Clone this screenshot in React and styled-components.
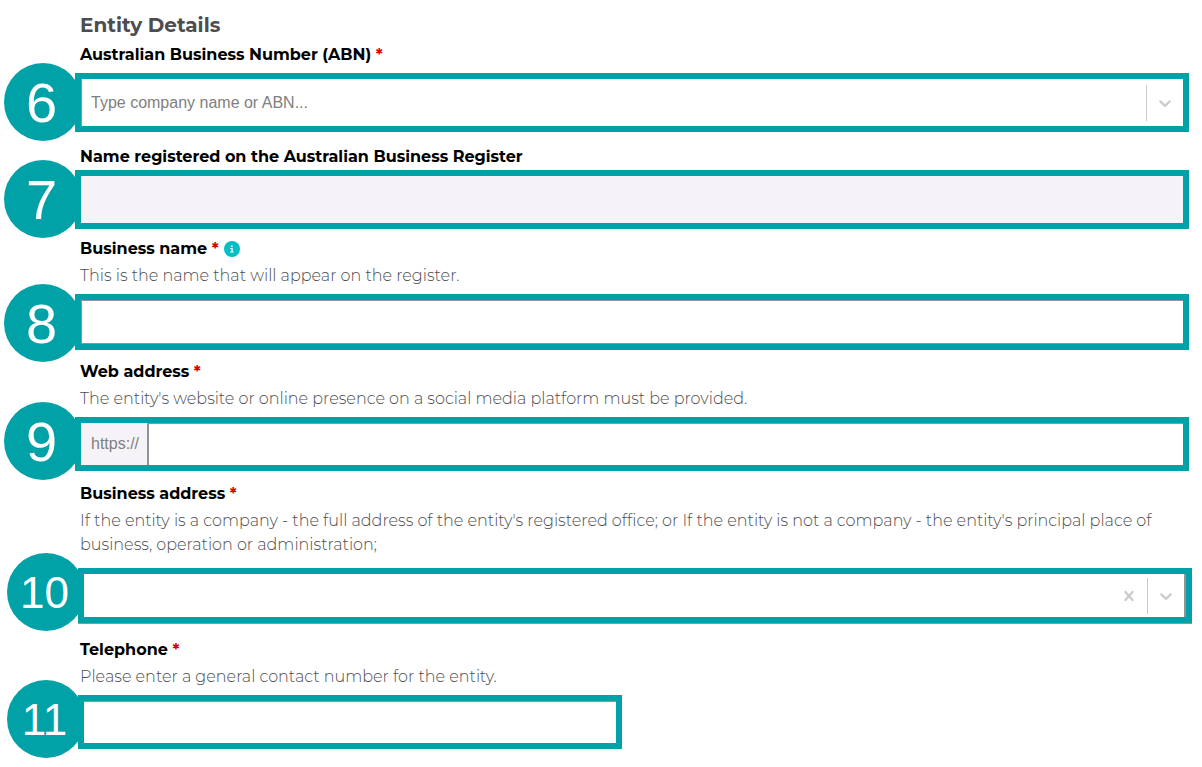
import React, { useState } from "react";
import styled, { createGlobalStyle } from "styled-components";

const chevronPath =
  "M4.516 7.548c0.436-0.446 1.043-0.481 1.576 0l3.908 3.747 3.908-3.747c0.533-0.481 1.141-0.446 1.574 0 0.436 0.445 0.408 1.197 0 1.615-0.406 0.418-4.695 4.502-4.695 4.502-0.217 0.223-0.502 0.335-0.787 0.335s-0.57-0.112-0.789-0.335c0 0-4.287-4.084-4.695-4.502s-0.436-1.17 0-1.615z";
const crossPath =
  "M14.348 14.849c-0.469 0.469-1.229 0.469-1.697 0l-2.651-3.030-2.651 3.029c-0.469 0.469-1.229 0.469-1.697 0-0.469-0.469-0.469-1.229 0-1.697l2.758-3.15-2.759-3.152c-0.469-0.469-0.469-1.228 0-1.697s1.228-0.469 1.697 0l2.652 3.031 2.651-3.031c0.469-0.469 1.228-0.469 1.697 0s0.469 1.229 0 1.697l-2.758 3.152 2.758 3.15c0.469 0.469 0.469 1.229 0 1.698z";

const InfoIcon = () => (
  <svg width="16" height="16" viewBox="0 0 16 16" aria-hidden="true">
    <circle cx="8" cy="8" r="8" fill="#00bfc5" />
    <path
      d="M7.1 4.4h1.6v1.5H7.1zM6.3 6.9h2.4v3.6h1v1H6.1v-1h1.2V7.9h-1z"
      fill="#fff"
    />
  </svg>
);

const Icon = ({ d }) => (
  <svg width="20" height="20" viewBox="0 0 20 20" aria-hidden="true">
    <path d={d} fill="#ccc" />
  </svg>
);

const Field = ({ id, step, label, required, info, hint, space, gap, inset, narrow, height, lines, children }) => (
  <Row $space={space}>
    <LabelLine>
      <Label htmlFor={id}>
        {label}
        {required && <Star> *</Star>}
      </Label>
      {info && (
        <InfoButton type="button" aria-label="More information">
          <InfoIcon />
        </InfoButton>
      )}
    </LabelLine>
    {hint && <Hint id={`${id}-hint`}>{hint}</Hint>}
    <Highlight $gap={gap} $inset={inset} $narrow={narrow}>
      <Badge $small={step > 9} $raised={height < 56}>
        {step}
      </Badge>
      <Frame $height={height} $lines={lines}>
        {children}
      </Frame>
    </Highlight>
  </Row>
);

const App = () => {
  const [address, setAddress] = useState("");

  return (
    <>
      <GlobalStyle />
      <Form>
        <Title>Entity Details</Title>
        <Field
          id="abn"
          step={6}
          label="Australian Business Number (ABN)"
          required
          height={59}
          lines="left"
          space={13}
        >
          <Input id="abn" placeholder="Type company name or ABN..." />
          <Divider />
          <IconButton type="button" aria-label="Show companies">
            <Icon d={chevronPath} />
          </IconButton>
        </Field>
        <Field
          id="registered"
          step={7}
          label="Name registered on the Australian Business Register"
          height={59}
          gap={1}
          space={8}
        >
          <Input id="registered" disabled />
        </Field>
        <Field
          id="name"
          step={8}
          label="Business name"
          required
          info
          hint="This is the name that will appear on the register."
          height={56}
          lines="box"
          space={10}
        >
          <Input id="name" aria-describedby="name-hint" />
        </Field>
        <Field
          id="web"
          step={9}
          label="Web address"
          required
          hint="The entity's website or online presence on a social media platform must be provided."
          height={54}
          lines="top"
          space={11}
        >
          <Prefix>https://</Prefix>
          <Input id="web" aria-describedby="web-hint" />
        </Field>
        <Field
          id="address"
          step={10}
          label="Business address"
          required
          hint="If the entity is a company - the full address of the entity's registered office; or If the entity is not a company - the entity's principal place of business, operation or administration;"
          height={55}
          inset
          gap={11}
          lines="right"
          space={15}
        >
          <Input
            id="address"
            aria-describedby="address-hint"
            value={address}
            onChange={(e) => setAddress(e.target.value)}
          />
          <IconButton type="button" aria-label="Clear address" onClick={() => setAddress("")}>
            <Icon d={crossPath} />
          </IconButton>
          <Divider />
          <IconButton type="button" aria-label="Show addresses">
            <Icon d={chevronPath} />
          </IconButton>
        </Field>
        <Field
          id="phone"
          step={11}
          label="Telephone"
          required
          hint="Please enter a general contact number for the entity."
          height={54}
          inset
          narrow
          lines="top"
          space={10}
        >
          <Input id="phone" type="tel" aria-describedby="phone-hint" />
        </Field>
      </Form>
    </>
  );
};

export default App;

const GlobalStyle = createGlobalStyle`
  * {
    box-sizing: border-box;
  }
  body {
    margin: 0;
    background: #fff;
    font-family: Montserrat, Inter, sans-serif;
  }
`;

const Form = styled.form`
  padding: 12px 16px 8px 80px;
`;

const Title = styled.h2`
  margin: 0 0 5px;
  font-size: 20px;
  line-height: 26px;
  font-weight: 700;
  color: #4d4d4f;
`;

const Row = styled.div`
  margin-bottom: ${({ $space }) => $space}px;
`;

const LabelLine = styled.div`
  display: flex;
  align-items: center;
  gap: 5px;
  height: 24px;
`;

const Label = styled.label`
  font-size: 16px;
  line-height: 24px;
  font-weight: 700;
  color: #000;
`;

const Star = styled.span`
  color: #d90000;
`;

const InfoButton = styled.button`
  display: flex;
  padding: 0;
  border: 0;
  background: none;
  cursor: pointer;
`;

const Hint = styled.p`
  margin: 3px 0 0;
  font-size: 16px;
  line-height: 24px;
  font-weight: 300;
  color: #4d4d4f;
`;

const Highlight = styled.div`
  position: relative;
  z-index: 0;
  margin-top: ${({ $gap = 6 }) => $gap}px;
  margin-left: ${({ $inset }) => ($inset ? -2 : -5)}px;
  margin-right: ${({ $inset }) => ($inset ? -6 : -3)}px;
  max-width: ${({ $narrow }) => ($narrow ? "544px" : "none")};
`;

const Badge = styled.span`
  position: absolute;
  z-index: -1;
  left: -71px;
  top: ${({ $raised }) => ($raised ? -15 : -10)}px;
  display: flex;
  align-items: center;
  justify-content: center;
  width: 78px;
  height: 78px;
  padding: 2px 3px 0 0;
  border-radius: 50%;
  background: #00a1a7;
  color: #fff;
  font-family: "Liberation Sans", Arial, sans-serif;
  font-size: ${({ $small }) => ($small ? 44 : 56)}px;
  line-height: 1;
`;

const innerLines = {
  left: "inset 1px 0 #949494",
  top: "inset 0 1px #949494",
  right: "inset -2px 0 #949494, 0 1px #949494",
  box: "inset 1px 1px #949494, inset 0 -1px #949494",
};

const Frame = styled.div`
  display: flex;
  align-items: center;
  height: ${({ $height }) => $height}px;
  border: 6px solid #00a1a7;
  background: #fff;
  box-shadow: ${({ $lines }) => innerLines[$lines] || "none"};
  padding-right: ${({ $lines }) => ($lines === "right" ? 2 : 0)}px;
`;

const Input = styled.input`
  flex: 1;
  min-width: 0;
  height: 100%;
  padding: 0 10px;
  border: 0;
  outline: 0;
  background: transparent;
  font-family: "Liberation Sans", Arial, sans-serif;
  font-size: 16px;
  color: #333;

  &::placeholder {
    color: #808080;
  }
  &:disabled {
    background: #f5f3f7;
  }
`;

const Prefix = styled.span`
  display: flex;
  align-items: center;
  height: 100%;
  padding: 0 8px 0 10px;
  border-right: 2px solid #949494;
  background: #f5f3f7;
  font-family: "Liberation Sans", Arial, sans-serif;
  font-size: 16px;
  color: #808080;
`;

const Divider = styled.span`
  width: 1px;
  height: 36px;
  background: #ccc;
`;

const IconButton = styled.button`
  display: flex;
  padding: 8px;
  border: 0;
  background: none;
  cursor: pointer;
`;
